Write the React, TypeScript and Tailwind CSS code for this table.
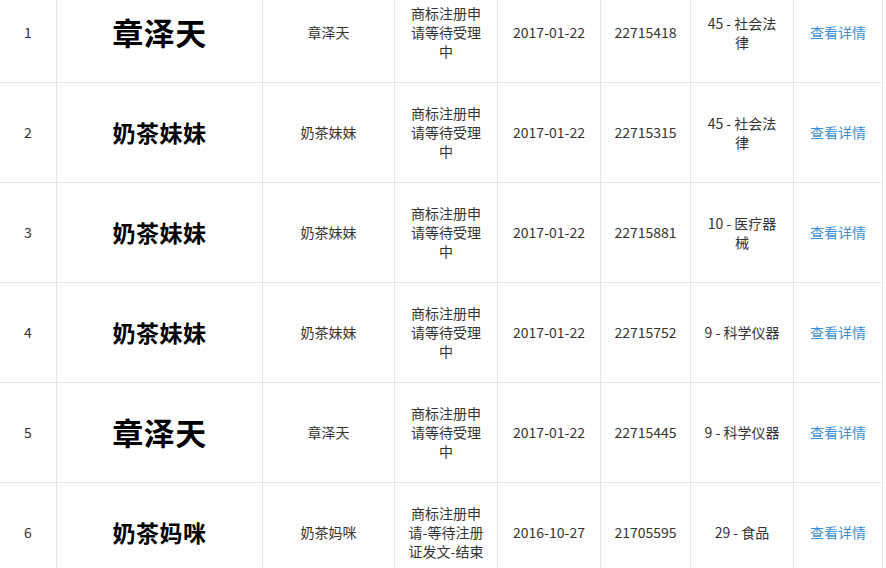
const rows = [
  { no: 1, brand: '章泽天', big: true, name: '章泽天', status: ['商标注册申', '请等待受理', '中'], date: '2017-01-22', reg: '22715418', cls: ['45 - 社会法', '律'] },
  { no: 2, brand: '奶茶妹妹', big: false, name: '奶茶妹妹', status: ['商标注册申', '请等待受理', '中'], date: '2017-01-22', reg: '22715315', cls: ['45 - 社会法', '律'] },
  { no: 3, brand: '奶茶妹妹', big: false, name: '奶茶妹妹', status: ['商标注册申', '请等待受理', '中'], date: '2017-01-22', reg: '22715881', cls: ['10 - 医疗器', '械'] },
  { no: 4, brand: '奶茶妹妹', big: false, name: '奶茶妹妹', status: ['商标注册申', '请等待受理', '中'], date: '2017-01-22', reg: '22715752', cls: ['9 - 科学仪器'] },
  { no: 5, brand: '章泽天', big: true, name: '章泽天', status: ['商标注册申', '请等待受理', '中'], date: '2017-01-22', reg: '22715445', cls: ['9 - 科学仪器'] },
  { no: 6, brand: '奶茶妈咪', big: false, name: '奶茶妈咪', status: ['商标注册申', '请-等待注册', '证发文-结束'], date: '2016-10-27', reg: '21705595', cls: ['29 - 食品'] },
];

const cell = 'flex items-center justify-center text-center border-r border-b border-[#e6e6e6] h-[100px]';

export default function App() {
  return (
    <div
      className="w-[886px] h-[568px] overflow-hidden bg-white text-[#333] text-[14px]"
      style={{ fontFamily: '"Noto Sans CJK SC", "Noto Sans", sans-serif' }}
    >
      <div className="mt-[-17px] w-[883px]">
        {rows.map((r) => (
          <div
            key={r.no}
            className="grid grid-cols-[57px_206px_132px_103px_103px_90px_103px_89px]"
          >
            <div className={cell}>{r.no}</div>
            <div
              className={`${cell} font-bold text-black ${r.big ? 'text-[31px] tracking-[0.5px]' : 'text-[23px] tracking-[0.5px]'}`}
            >
              {r.brand}
            </div>
            <div className={cell}>{r.name}</div>
            <div className={`${cell} leading-[19px]`}>
              <div>
                {r.status.map((s, i) => (
                  <div key={i} className="whitespace-nowrap">{s}</div>
                ))}
              </div>
            </div>
            <div className={cell}>{r.date}</div>
            <div className={cell}>{r.reg}</div>
            <div className={`${cell} leading-[19px]`}>
              <div>
                {r.cls.map((s, i) => (
                  <div key={i} className="whitespace-nowrap">{s}</div>
                ))}
              </div>
            </div>
            <div className={`${cell} text-[#3b8fd6]`}>查看详情</div>
          </div>
        ))}
      </div>
    </div>
  );
}
